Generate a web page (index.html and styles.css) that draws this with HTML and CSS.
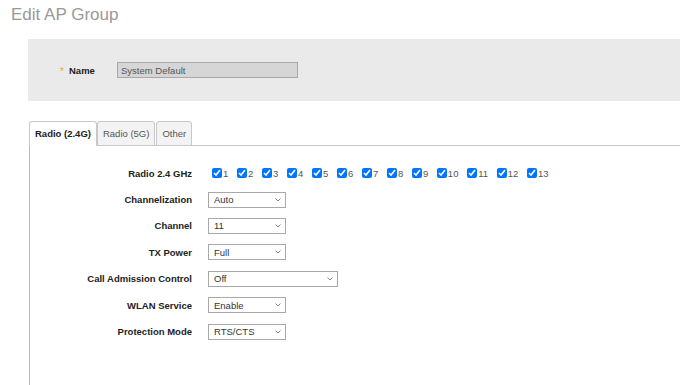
FILE: index.html
```html
<!DOCTYPE html>
<html lang="en">
<head>
	<meta charset="UTF-8">
	<title>Edit AP Group</title>
	<link rel="stylesheet" href="styles.css">
</head>
<body>
	<h1 class="page-title">Edit AP Group</h1>

	<div class="name-panel">
		<div class="name-row">
			<span class="required">*</span>
			<label class="name-label" for="group-name">Name</label>
			<input class="name-input" id="group-name" type="text" value="System Default" readonly>
		</div>
	</div>

	<div class="tabs">
		<div class="tab-bar">
			<button class="tab active">Radio (2.4G)</button>
			<button class="tab">Radio (5G)</button>
			<button class="tab">Other</button>
		</div>
		<div class="tab-panel">
			<div class="form">
				<div class="label">Radio 2.4 GHz</div>
				<div class="channels">
					<label class="chan"><input type="checkbox" checked>1</label>
					<label class="chan"><input type="checkbox" checked>2</label>
					<label class="chan"><input type="checkbox" checked>3</label>
					<label class="chan"><input type="checkbox" checked>4</label>
					<label class="chan"><input type="checkbox" checked>5</label>
					<label class="chan"><input type="checkbox" checked>6</label>
					<label class="chan"><input type="checkbox" checked>7</label>
					<label class="chan"><input type="checkbox" checked>8</label>
					<label class="chan"><input type="checkbox" checked>9</label>
					<label class="chan"><input type="checkbox" checked>10</label>
					<label class="chan"><input type="checkbox" checked>11</label>
					<label class="chan"><input type="checkbox" checked>12</label>
					<label class="chan"><input type="checkbox" checked>13</label>
				</div>

				<div class="label">Channelization</div>
				<div><select class="select"><option>Auto</option></select></div>

				<div class="label">Channel</div>
				<div><select class="select"><option>11</option></select></div>

				<div class="label">TX Power</div>
				<div><select class="select"><option>Full</option></select></div>

				<div class="label">Call Admission Control</div>
				<div><select class="select wide"><option>Off</option></select></div>

				<div class="label">WLAN Service</div>
				<div><select class="select"><option>Enable</option></select></div>

				<div class="label">Protection Mode</div>
				<div><select class="select"><option>RTS/CTS</option></select></div>
			</div>
		</div>
	</div>
</body>
</html>
```

FILE: styles.css
```css
body {
	margin: 0;
	padding: 0;
	background: #fff;
	font-family: "Liberation Sans", Arial, sans-serif;
	font-size: 9.5px;
	color: #222;
	overflow: hidden;
	height: 385px;
}

.page-title {
	margin: 0 0 14px 0;
	padding: 5px 0 0 11px;
	font-size: 17px;
	font-weight: normal;
	line-height: 20px;
	color: #999;
}

.name-panel {
	margin-left: 28px;
	background: #eaeaea;
	padding: 23px 0;
}

.name-row {
	display: flex;
	align-items: center;
	padding-left: 32px;
	height: 16px;
}

.required {
	width: 9px;
	padding-top: 3px;
	color: #f0a040;
	font-size: 10px;
	line-height: 10px;
}

.name-label {
	width: 48px;
	font-weight: bold;
}

.name-input {
	width: 181px;
	height: 16px;
	box-sizing: border-box;
	margin: 0;
	padding: 0 3px;
	border: 1px solid #a8a8a8;
	background: #d6d6d6;
	font-family: inherit;
	font-size: 9.5px;
	color: #555;
	outline: none;
}

.tabs {
	margin: 20px 0 0 29px;
}

.tab-bar {
	display: flex;
	height: 24px;
}

.tab {
	height: 25px;
	box-sizing: border-box;
	margin: 0 1px -1px 0;
	padding: 0 5px;
	border: 1px solid #c8c8c8;
	border-radius: 3px 3px 0 0;
	background: #f3f3f3;
	font-family: inherit;
	font-size: 9.5px;
	color: #555;
	cursor: pointer;
	position: relative;
}

.tab.active {
	background: #fff;
	border-bottom-color: #fff;
	font-weight: bold;
	color: #222;
	margin-right: 0;
}

.tab-panel {
	border-top: 1px solid #c8c8c8;
	border-left: 1px solid #bbb;
	height: 240px;
	padding-top: 14px;
}

.form {
	display: grid;
	grid-template-columns: 162px auto;
	grid-auto-rows: 26.4px;
	column-gap: 16px;
	align-items: center;
}

.label {
	text-align: right;
	font-weight: bold;
	color: #222;
}

.channels {
	display: flex;
	align-items: center;
	color: #555;
}

.chan {
	display: flex;
	align-items: center;
	margin-right: 4.7px;
}

.chan input {
	width: 10px;
	height: 10px;
	margin: 0 1px 0 4px;
}

.select {
	width: 78px;
	height: 16px;
	box-sizing: border-box;
	margin: 0;
	padding: 0 0 0 5px;
	border: 1px solid #a9a9a9;
	border-radius: 0;
	appearance: none;
	-webkit-appearance: none;
	background: #fff url("data:image/svg+xml,%3Csvg xmlns='http://www.w3.org/2000/svg' width='6' height='4'%3E%3Cpath d='M0.5 0.5L3 3L5.5 0.5' fill='none' stroke='%23777' stroke-width='0.9'/%3E%3C/svg%3E") no-repeat right 4px center;
	font-family: inherit;
	font-size: 9.5px;
	color: #333;
	display: block;
}

.select.wide {
	width: 130px;
}
```
